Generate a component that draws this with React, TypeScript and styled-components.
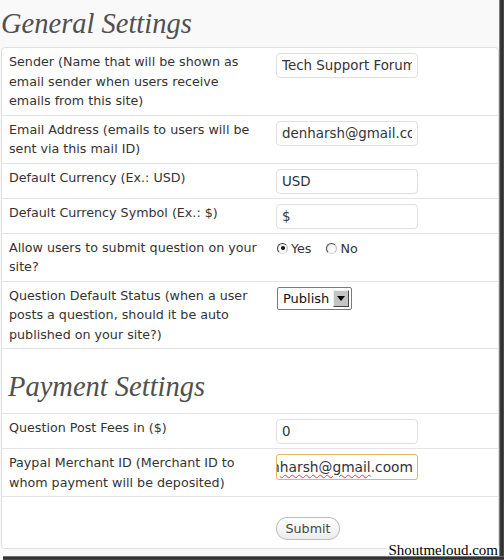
import React from "react";
import styled, { createGlobalStyle } from "styled-components";

const Global = createGlobalStyle`
  html, body { margin: 0; padding: 0; background: #f9f9f9; }
  body { font-family: "DejaVu Sans", Verdana, sans-serif; }
`;

const Frame = styled.div`
  position: relative;
  width: 504px;
  height: 560px;
  display: flex;
  flex-direction: column;
  overflow: hidden;
  background: #f9f9f9;
`;

const Upper = styled.div`
  display: flex;
  flex: 1;
  min-height: 0;
`;

const Content = styled.div`
  width: 499px;
  padding-top: 8px;
  box-sizing: border-box;
`;

const RightEdge = styled.div`
  width: 5px;
  background: linear-gradient(to right, #a0a0a0, #3a3a3a 30%, #2e2e2e 70%, #5a5a5a);
`;

const BottomEdge = styled.div`
  height: 4px;
  margin-left: 3px;
  background: linear-gradient(to bottom, #8a8a8a, #2e2e2e 40%, #333 70%, #5a5a5a);
`;

const SectionTitle = styled.h2<{ $inset?: boolean }>`
  margin: 0;
  font-family: "Liberation Serif", "Times New Roman", serif;
  font-style: italic;
  font-weight: normal;
  font-size: 28.5px;
  line-height: 32px;
  color: #505050;
  padding: ${(p) => (p.$inset ? "22px 0 10px 6px" : "0 0 7px 1px")};
  border-bottom: ${(p) => (p.$inset ? "1px solid #e4e4e4" : "none")};
`;

const Panel = styled.div`
  margin-left: 1px;
  width: 498px;
  box-sizing: border-box;
  border: 1px solid #dfdfdf;
  border-radius: 4px;
  background: #fff;
`;

const Row = styled.div<{ $last?: boolean }>`
  display: grid;
  grid-template-columns: 274px 1fr;
  border-bottom: ${(p) => (p.$last ? "none" : "1px solid #e4e4e4")};
`;

const Label = styled.div`
  padding: 4px 15px 4px 7px;
  font-size: 12.7px;
  line-height: 19.5px;
  color: #333;
`;

const Field = styled.div<{ $pad?: string }>`
  padding: ${(p) => p.$pad ?? "5px 0 4px"};
`;

const TextInput = styled.input`
  display: block;
  box-sizing: border-box;
  width: 142px;
  height: 25px;
  margin: 0;
  border: 1px solid #dfdfdf;
  border-radius: 4px;
  padding: 0 5px;
  font-family: "DejaVu Sans", Verdana, sans-serif;
  font-size: 13.4px;
  color: #333;
  background: #fff;
  outline: none;
`;

const FocusedInput = styled.div`
  box-sizing: border-box;
  width: 142px;
  height: 26px;
  border: 1px solid #e6b65a;
  border-radius: 3px;
  padding: 0 4px 0 0;
  display: flex;
  align-items: center;
  justify-content: flex-end;
  overflow: hidden;
  white-space: nowrap;
  font-size: 13.8px;
  color: #333;
  background: #fff;
`;

const Misspelled = styled.span`
  text-decoration: underline wavy #e23a3a;
  text-decoration-thickness: 1px;
  text-underline-offset: 2px;
`;

const RadioGroup = styled.div`
  display: flex;
  align-items: center;
  height: 19.5px;
  font-size: 12.7px;
  color: #333;
`;

const RadioDot = styled.span<{ $checked?: boolean }>`
  position: relative;
  width: 11px;
  height: 11px;
  box-sizing: border-box;
  border-radius: 50%;
  border: 1px solid;
  border-color: #444 #bbb #ddd #444;
  background: radial-gradient(circle at 65% 65%, #fff, #e8e8e8);
  margin: 0 3px 0 1px;
  &::after {
    content: "";
    display: ${(p) => (p.$checked ? "block" : "none")};
    position: absolute;
    left: 2.5px;
    top: 2.5px;
    width: 4px;
    height: 4px;
    border-radius: 50%;
    background: #111;
  }
`;

const RadioText = styled.span`
  margin-right: 14px;
`;

const Select = styled.div`
  display: flex;
  align-items: center;
  justify-content: space-between;
  width: 75px;
  height: 23px;
  margin-left: 1px;
  box-sizing: border-box;
  border: 1px solid #7a7a7a;
  border-radius: 2px;
  box-shadow: inset 0 0 0 1px #fff;
  background: #fff;
  padding: 0 2px 0 5px;
  font-size: 13px;
  color: #111;
`;

const SelectArrow = styled.span`
  display: flex;
  align-items: center;
  justify-content: center;
  width: 16px;
  height: 17px;
  box-sizing: border-box;
  border: 1px solid;
  border-color: #eee #444 #444 #eee;
  background: #c4c4c4;
`;

const SubmitButton = styled.button`
  display: block;
  width: 64px;
  height: 23px;
  margin: 0;
  padding: 0;
  border: 1px solid #bbb;
  border-radius: 11px;
  background: linear-gradient(#fff, #ececec);
  font-family: "DejaVu Sans", Verdana, sans-serif;
  font-size: 12.7px;
  color: #464646;
`;

const Watermark = styled.div`
  position: absolute;
  right: 6px;
  bottom: 4px;
  height: 11px;
  padding-left: 2px;
  background: #fff;
  font-family: "Liberation Serif", "Times New Roman", serif;
  font-size: 15px;
  line-height: 11px;
  color: #000;
`;

export default function App() {
  return (
    <>
      <Global />
      <Frame>
        <Upper>
          <Content>
            <SectionTitle>General Settings</SectionTitle>
            <Panel>
              <Row>
                <Label>Sender (Name that will be shown as email sender when users receive emails from this site)</Label>
                <Field>
                  <TextInput readOnly value="Tech Support Forum" />
                </Field>
              </Row>
              <Row>
                <Label>Email Address (emails to users will be sent via this mail ID)</Label>
                <Field>
                  <TextInput readOnly value="denharsh@gmail.com" />
                </Field>
              </Row>
              <Row>
                <Label>Default Currency (Ex.: USD)</Label>
                <Field>
                  <TextInput readOnly value="USD" />
                </Field>
              </Row>
              <Row>
                <Label>Default Currency Symbol (Ex.: $)</Label>
                <Field>
                  <TextInput readOnly value="$" />
                </Field>
              </Row>
              <Row>
                <Label>Allow users to submit question on your site?</Label>
                <Field>
                  <RadioGroup>
                    <RadioDot $checked />
                    <RadioText>Yes</RadioText>
                    <RadioDot />
                    <RadioText>No</RadioText>
                  </RadioGroup>
                </Field>
              </Row>
              <Row>
                <Label>Question Default Status (when a user posts a question, should it be auto published on your site?)</Label>
                <Field>
                  <Select>
                    <span>Publish</span>
                    <SelectArrow>
                      <svg width="8" height="5" viewBox="0 0 8 5">
                        <path d="M0 0 H8 L4 5 Z" fill="#000" />
                      </svg>
                    </SelectArrow>
                  </Select>
                </Field>
              </Row>
              <SectionTitle $inset>Payment Settings</SectionTitle>
              <Row>
                <Label>Question Post Fees in ($)</Label>
                <Field>
                  <TextInput readOnly value="0" />
                </Field>
              </Row>
              <Row>
                <Label>Paypal Merchant ID (Merchant ID to whom payment will be deposited)</Label>
                <Field>
                  <FocusedInput>
                    <span>
                      den<Misspelled>harsh@gmail</Misspelled>.coom
                    </span>
                  </FocusedInput>
                </Field>
              </Row>
              <Row $last>
                <Label />
                <Field $pad="20px 0 8px">
                  <SubmitButton type="button">Submit</SubmitButton>
                </Field>
              </Row>
            </Panel>
          </Content>
          <RightEdge />
        </Upper>
        <BottomEdge />
        <Watermark>Shoutmeloud.com</Watermark>
      </Frame>
    </>
  );
}
